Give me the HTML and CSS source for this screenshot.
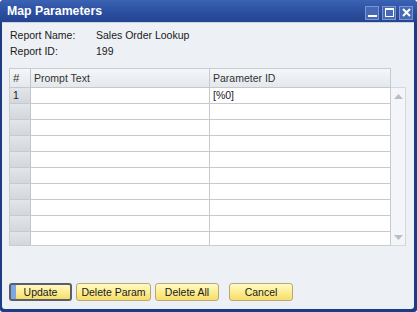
FILE: index.html
```html
<!DOCTYPE html>
<html lang="en">
<head>
    <meta charset="UTF-8">
    <title>Map Parameters</title>
    <link rel="stylesheet" href="styles.css">
</head>
<body>
    <div class="window">
        <div class="titlebar">
            <span class="title">Map Parameters</span>
            <div class="win-buttons">
                <span class="win-btn"><svg width="9" height="9" viewBox="0 0 9 9"><rect x="0" y="7" width="9" height="2" fill="#fff"/></svg></span>
                <span class="win-btn"><svg width="9" height="9" viewBox="0 0 9 9"><rect x="0.5" y="0.5" width="8" height="8" fill="none" stroke="#fff"/><rect x="0" y="0" width="9" height="2" fill="#fff"/></svg></span>
                <span class="win-btn"><svg width="9" height="9" viewBox="0 0 9 9"><path d="M1 1 L8 8 M8 1 L1 8" stroke="#fff" stroke-width="2"/></svg></span>
            </div>
        </div>

        <div class="content">
            <div class="info">
                <div class="info-row"><span class="info-label">Report Name:</span><span>Sales Order Lookup</span></div>
                <div class="info-row"><span class="info-label">Report ID:</span><span>199</span></div>
            </div>

            <div class="grid">
                <div class="grid-main">
                    <div class="grid-row grid-head">
                        <div class="cell num">#</div>
                        <div class="cell prompt">Prompt Text</div>
                        <div class="cell param">Parameter ID</div>
                    </div>
                    <div class="grid-row">
                        <div class="cell num">1</div>
                        <div class="cell prompt"></div>
                        <div class="cell param">[%0]</div>
                    </div>
                    <div class="grid-row"><div class="cell num"></div><div class="cell prompt"></div><div class="cell param"></div></div>
                    <div class="grid-row"><div class="cell num"></div><div class="cell prompt"></div><div class="cell param"></div></div>
                    <div class="grid-row"><div class="cell num"></div><div class="cell prompt"></div><div class="cell param"></div></div>
                    <div class="grid-row"><div class="cell num"></div><div class="cell prompt"></div><div class="cell param"></div></div>
                    <div class="grid-row"><div class="cell num"></div><div class="cell prompt"></div><div class="cell param"></div></div>
                    <div class="grid-row"><div class="cell num"></div><div class="cell prompt"></div><div class="cell param"></div></div>
                    <div class="grid-row"><div class="cell num"></div><div class="cell prompt"></div><div class="cell param"></div></div>
                    <div class="grid-row"><div class="cell num"></div><div class="cell prompt"></div><div class="cell param"></div></div>
                    <div class="grid-row last"><div class="cell num"></div><div class="cell prompt"></div><div class="cell param"></div></div>
                </div>
                <div class="scrollbar">
                    <svg width="9" height="5" viewBox="0 0 9 5"><path d="M0 5 L4.5 0 L9 5 Z" fill="#b8bec6"/></svg>
                    <svg width="9" height="5" viewBox="0 0 9 5"><path d="M0 0 L4.5 5 L9 0 Z" fill="#b8bec6"/></svg>
                </div>
            </div>

            <div class="buttons">
                <button class="btn btn-default">Update</button>
                <button class="btn">Delete Param</button>
                <button class="btn">Delete All</button>
                <button class="btn btn-cancel">Cancel</button>
            </div>
        </div>
    </div>
</body>
</html>
```

FILE: styles.css
```css
body {
    margin: 0;
    padding: 0;
    font-family: 'Liberation Sans', Arial, sans-serif;
    font-size: 10.5px;
    color: #1a1a1a;
    background: #ffffff;
}

.window {
    width: 417px;
    height: 312px;
    box-sizing: border-box;
    display: flex;
    flex-direction: column;
    background: #1d3c86;
    border-radius: 4px 4px 3px 3px;
    padding: 0 3px 3px 2px;
}

.titlebar {
    height: 22px;
    display: flex;
    align-items: center;
    justify-content: space-between;
    padding: 0 4px 0 7px;
    background: linear-gradient(#3c62b4, #2a4d9e 60%, #234490);
    margin: 0 -3px 0 -2px;
    border-radius: 4px 4px 0 0;
}

.title {
    color: #ffffff;
    font-weight: bold;
    font-size: 12.3px;
}

.win-buttons {
    display: flex;
    gap: 3px;
    margin-top: 3px;
}

.win-btn {
    width: 12px;
    height: 12px;
    display: flex;
    align-items: center;
    justify-content: center;
    background: #4669b6;
    border: 1px solid #7b95cf;
}

.content {
    flex: 1;
    background: #edf1f5;
    border-top: 1px solid #c8d2e2;
    border-radius: 0 0 3px 3px;
    padding: 0 8px 0 7px;
    display: flex;
    flex-direction: column;
}

.info {
    padding: 4px 0 0 1px;
}

.info-row {
    height: 16px;
    line-height: 16px;
    display: flex;
}

.info-label {
    width: 86px;
}

.grid {
    margin-top: 9px;
    display: flex;
    height: 178px;
}

.grid-main {
    width: 381px;
    border: 1px solid #c9cdd2;
    border-right: none;
    background: #ffffff;
    display: flex;
    flex-direction: column;
}

.grid-row {
    display: flex;
    height: 15px;
    border-bottom: 1px solid #c6cacf;
}

.grid-row.last {
    border-bottom: none;
    flex: 1;
}

.cell {
    line-height: 15px;
    padding-left: 3px;
    box-sizing: border-box;
    border-right: 1px solid #c6cacf;
}

.num {
    width: 21px;
    background: linear-gradient(#e2e5e9, #d3d7dc);
    border-right: 1px solid #c0c5cb;
}

.prompt {
    width: 179px;
}

.param {
    width: 181px;
    border-right: 1px solid #c6cacf;
}

.grid-head {
    height: 18px;
    background: linear-gradient(#f5f7f9, #e4e8ec);
    border-bottom: 1px solid #c3c8cd;
}

.grid-head .cell {
    line-height: 18px;
    color: #333333;
}

.grid-head .num {
    background: transparent;
    font-size: 11.5px;
}

.scrollbar {
    width: 15px;
    margin-top: 19px;
    border: 1px solid #d3d8de;
    border-left: none;
    background: #f3f5f8;
    display: flex;
    flex-direction: column;
    align-items: center;
    justify-content: space-between;
    padding: 6px 0 5px;
    box-sizing: border-box;
}

.buttons {
    margin-top: 37px;
    display: flex;
    padding-left: 0;
}

.btn {
    height: 18px;
    font-family: 'Liberation Sans', Arial, sans-serif;
    font-size: 10.5px;
    color: #1a1a1a;
    background: linear-gradient(#fff9c8, #fcec8e 55%, #f6dd6a);
    border: 1px solid #b8a878;
    border-radius: 3px;
    padding: 0;
    margin-right: 4px;
}

.btn-default {
    width: 63px;
    border: 2px solid #5a5e66;
    box-shadow: inset 5px 0 0 #7ea6e0;
}

.btn:nth-child(2) {
    width: 75px;
}

.btn:nth-child(3) {
    width: 64px;
}

.btn-cancel {
    width: 64px;
    margin-left: 6px;
}
```
